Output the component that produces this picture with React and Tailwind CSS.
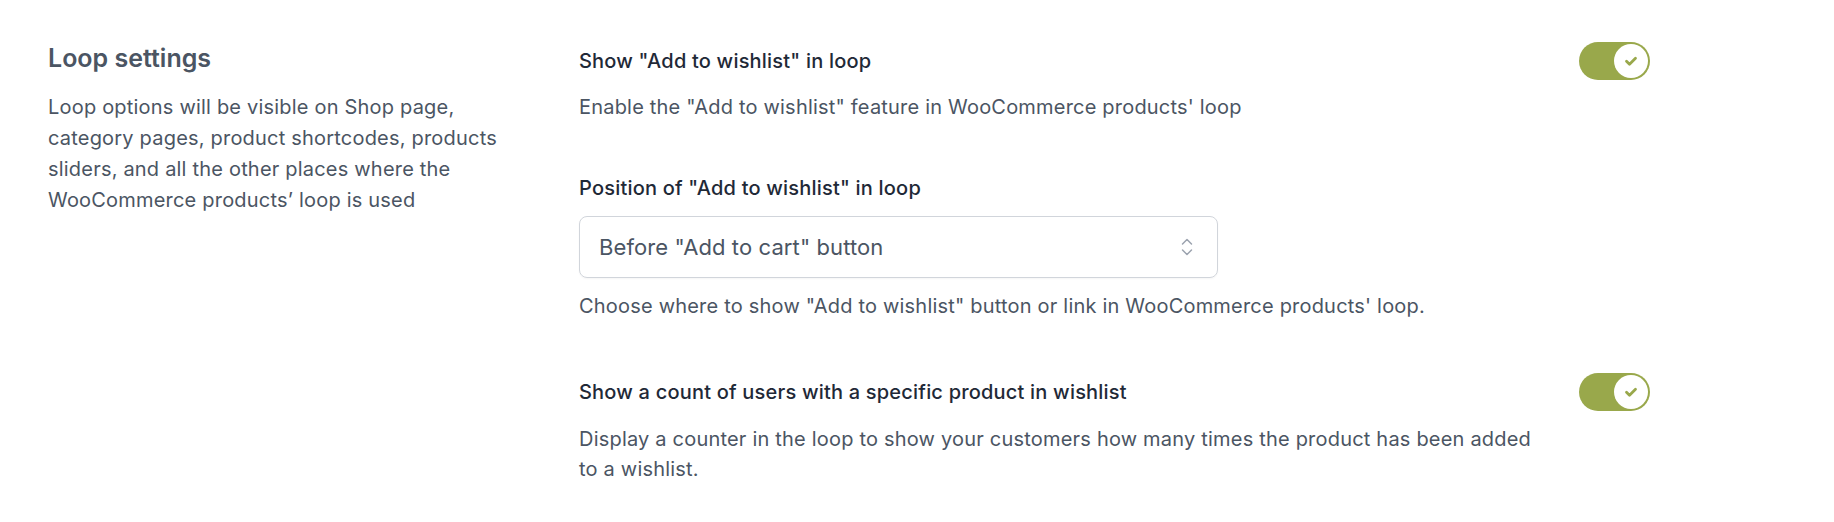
import React from "react";

function Toggle() {
  return (
    <div className="flex h-[38px] w-[71px] shrink-0 items-center justify-end rounded-full bg-[#99a84b] p-[2px]">
      <div className="flex h-[34px] w-[34px] items-center justify-center rounded-full bg-white">
        <svg width="18" height="18" viewBox="0 0 18 18" fill="none">
          <path d="M4.5 9.3l3 3L13.5 6.2" stroke="#99a84b" strokeWidth="2.8" strokeLinecap="round" strokeLinejoin="round" />
        </svg>
      </div>
    </div>
  );
}

function Chevrons() {
  return (
    <svg width="14" height="24" viewBox="0 0 14 24" fill="none">
      <path d="M2.5 9l4.5-4.5 4.5 4.5" stroke="#9ca3af" strokeWidth="1.5" strokeLinecap="round" strokeLinejoin="round" />
      <path d="M2.5 15l4.5 4.5 4.5-4.5" stroke="#9ca3af" strokeWidth="1.5" strokeLinecap="round" strokeLinejoin="round" />
    </svg>
  );
}

export default function App() {
  return (
    <div
      className="min-h-[522px] w-full bg-white pl-[48px] pt-[42px] text-[#4b5563]"
      style={{ fontFamily: "Inter, 'Noto Sans', sans-serif" }}
    >
      <div className="flex">
        <div className="w-[531px] shrink-0">
          <h2 className="text-[25px] font-semibold leading-[32px] text-[#4b5563]">Loop settings</h2>
          <p className="mt-[18px] w-[470px] text-[20px] leading-[31px] tracking-[0.2px] text-[#4b5563]">
            Loop options will be visible on Shop page, category pages, product shortcodes, products sliders, and all the other places where the WooCommerce products’ loop is used
          </p>
        </div>
        <div className="flex w-[1071px] flex-col gap-[52px]">
          <div>
            <div className="flex items-center justify-between">
              <span className="text-[20px] font-medium leading-[28px] tracking-[0.2px] text-[#1f2937]">Show "Add to wishlist" in loop</span>
              <Toggle />
            </div>
            <p className="mt-[12px] text-[20px] leading-[30px] tracking-[0.2px] text-[#4b5563]">
              Enable the "Add to wishlist" feature in WooCommerce products' loop
            </p>
          </div>
          <div>
            <div className="text-[20px] font-medium leading-[28px] tracking-[0.2px] text-[#1f2937]">Position of "Add to wishlist" in loop</div>
            <div className="mt-[14px] flex h-[62px] w-[639px] items-center justify-between rounded-[8px] border border-[#d1d5db] pl-[19px] pr-[23px] shadow-[0_1px_2px_rgba(0,0,0,0.04)]">
              <span className="text-[22px] tracking-[0.1px] text-[#4b5563]">Before "Add to cart" button</span>
              <Chevrons />
            </div>
            <p className="mt-[13px] text-[20px] leading-[30px] tracking-[0.2px] text-[#4b5563]">
              Choose where to show "Add to wishlist" button or link in WooCommerce products' loop.
            </p>
          </div>
          <div>
            <div className="flex items-center justify-between">
              <span className="text-[20px] font-medium leading-[28px] tracking-[0.2px] text-[#1f2937]">Show a count of users with a specific product in wishlist</span>
              <Toggle />
            </div>
            <p className="mt-[13px] w-[965px] text-[20px] leading-[30px] tracking-[0.2px] text-[#4b5563]">
              Display a counter in the loop to show your customers how many times the product has been added to a wishlist.
            </p>
          </div>
        </div>
      </div>
    </div>
  );
}
